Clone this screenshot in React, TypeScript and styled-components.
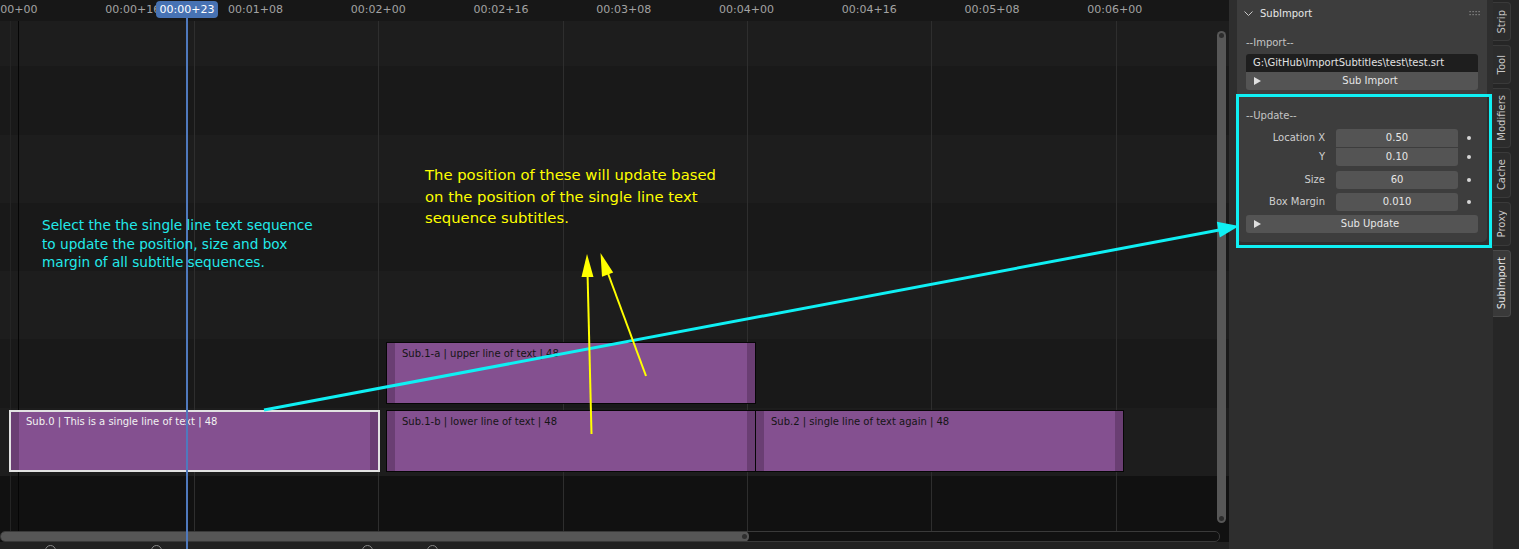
import React from "react";
import styled, { createGlobalStyle } from "styled-components";

const GlobalStyle = createGlobalStyle`
  html, body { margin: 0; padding: 0; background: #111111; overflow: hidden; }
  body { font-family: "DejaVu Sans", "Noto Sans", sans-serif; }
  #root { width: 1519px; height: 549px; }
`;

const Screen = styled.div`
  position: relative;
  display: flex;
  width: 1519px;
  height: 549px;
  overflow: hidden;
  font-family: "DejaVu Sans", "Noto Sans", sans-serif;
`;

/* ---------- timeline ---------- */
const Timeline = styled.div`
  position: relative;
  display: flex;
  flex-direction: column;
  width: 1229px;
  flex: none;
  background: #111111;
`;

const Ruler = styled.div`
  position: relative;
  height: 21px;
  flex: none;
  background: #171717;
  overflow: hidden;
  z-index: 4;
`;

const RulerLabel = styled.span<{ $x: number }>`
  position: absolute;
  top: 3px;
  left: ${(p) => p.$x}px;
  transform: translateX(-50%);
  font-size: 11px;
  line-height: 14px;
  color: #a3a3a3;
  white-space: nowrap;
`;

const ChannelArea = styled.div`
  position: relative;
  flex: 1;
  overflow: hidden;
`;

const ChannelStack = styled.div`
  display: flex;
  flex-direction: column;
  height: 100%;
`;

const Channel = styled.div<{ $h: number; $tone: "light" | "dark" | "empty" }>`
  height: ${(p) => p.$h}px;
  flex: none;
  background: ${(p) =>
    p.$tone === "light" ? "#1d1d1d" : p.$tone === "dark" ? "#191919" : "#111111"};
`;

const GridLine = styled.div<{ $x: number; $tone?: "grid" | "faint" | "start" }>`
  position: absolute;
  top: 21px;
  bottom: 0;
  left: ${(p) => p.$x}px;
  width: 1px;
  z-index: 1;
  background: ${(p) =>
    p.$tone === "start" ? "#050505" : p.$tone === "faint" ? "#242424" : "#2e2e2e"};
`;

const Strip = styled.div<{ $x: number; $y: number; $w: number; $selected?: boolean }>`
  position: absolute;
  left: ${(p) => p.$x}px;
  top: ${(p) => p.$y}px;
  width: ${(p) => p.$w}px;
  height: 62px;
  box-sizing: border-box;
  display: flex;
  z-index: 2;
  background: #845090;
  border: ${(p) => (p.$selected ? "2px solid #e2e2e2" : "1px solid #060606")};
`;

const StripHandle = styled.div`
  width: 8px;
  flex: none;
  background: #6a3e73;
`;

const StripLabel = styled.div<{ $selected?: boolean }>`
  flex: 1;
  min-width: 0;
  padding: ${(p) => (p.$selected ? "4px" : "5px")} 0 0 7px;
  font-size: 10px;
  line-height: 12px;
  white-space: nowrap;
  overflow: hidden;
  color: ${(p) => (p.$selected ? "#f2f2f2" : "#151515")};
`;

const VScroll = styled.div`
  position: absolute;
  right: 3px;
  top: 10px;
  width: 9px;
  height: 492px;
  border-radius: 5px;
  background: #575757;
  z-index: 3;
  &::before,
  &::after {
    content: "";
    position: absolute;
    left: 2px;
    width: 5px;
    height: 5px;
    border-radius: 50%;
    background: #2c2c2c;
  }
  &::before { top: 2px; }
  &::after { bottom: 2px; }
`;

const HScroll = styled.div`
  position: relative;
  z-index: 2;
  height: 11px;
  flex: none;
  display: flex;
  padding-right: 9px;
  background: #111111;
`;

const HTrack = styled.div`
  flex: 1;
  display: flex;
  border: 1px solid #3a3a3a;
  border-radius: 5px;
  overflow: hidden;
`;

const HThumb = styled.div`
  position: relative;
  width: 754px;
  margin: -1px 0 -1px -6px;
  flex: none;
  border-radius: 5px;
  background: #565656;
  &::after {
    content: "";
    position: absolute;
    right: 2px;
    top: 3px;
    width: 5px;
    height: 5px;
    border-radius: 50%;
    background: #2e2e2e;
  }
`;

const Footer = styled.div`
  position: relative;
  z-index: 2;
  height: 7px;
  flex: none;
  background: #222222;
  display: flex;
  overflow: hidden;
`;

const FooterIcon = styled.span<{ $ml: number }>`
  margin-left: ${(p) => p.$ml}px;
  margin-top: 3px;
  width: 9px;
  height: 9px;
  border: 1px solid #8a8a8a;
  border-radius: 50%;
  flex: none;
`;

const Playhead = styled.div`
  position: absolute;
  left: 186px;
  top: 17px;
  bottom: 0;
  width: 2px;
  background: #4f79bd;
  z-index: 6;
`;

const PlayheadBadge = styled.div`
  position: absolute;
  left: 156px;
  top: 1px;
  width: 62px;
  height: 17px;
  border-radius: 4px;
  background: #4772b3;
  color: #ffffff;
  font-size: 11px;
  line-height: 17px;
  text-align: center;
  z-index: 7;
`;

/* ---------- sidebar ---------- */
const Sidebar = styled.div`
  width: 264px;
  flex: none;
  box-sizing: border-box;
  padding: 0 6px 0 8px;
  background: #2e2e2e;
`;

const Panel = styled.div`
  background: #3d3d3d;
  border-radius: 0 0 5px 5px;
  color: #dcdcdc;
  font-size: 10px;
`;

const PanelHeader = styled.div`
  height: 26px;
  display: flex;
  align-items: center;
  padding: 1px 7px 0;
  box-sizing: border-box;
  gap: 7px;
  color: #e6e6e6;
`;

const PanelTitle = styled.span`
  flex: 1;
  line-height: 12px;
`;

const PanelBody = styled.div`
  padding: 0 9px 9px;
  display: flex;
  flex-direction: column;
`;

const SectionLabel = styled.div<{ $mt: number }>`
  margin-top: ${(p) => p.$mt}px;
  height: 18px;
  line-height: 18px;
  color: #c4c4c4;
`;

const TextField = styled.div`
  margin-top: 2px;
  height: 18px;
  line-height: 18px;
  padding-left: 7px;
  background: #1e1e1e;
  border-radius: 3px 3px 0 0;
  color: #e2e2e2;
  white-space: nowrap;
  overflow: hidden;
`;

const ActionButton = styled.div<{ $mt: number; $round: "bottom" | "all" }>`
  position: relative;
  margin-top: ${(p) => p.$mt}px;
  height: 18px;
  line-height: 18px;
  padding-left: 16px;
  background: #545454;
  border-radius: ${(p) => (p.$round === "all" ? "3px" : "0 0 3px 3px")};
  color: #e6e6e6;
  text-align: center;
  &::before {
    content: "";
    position: absolute;
    left: 8px;
    top: 5px;
    border-left: 7px solid #e0e0e0;
    border-top: 4px solid transparent;
    border-bottom: 4px solid transparent;
  }
`;

const PropRow = styled.div<{ $mt: number }>`
  margin-top: ${(p) => p.$mt}px;
  display: grid;
  grid-template-columns: 85px 127px 20px;
  height: 18px;
  align-items: center;
`;

const PropLabel = styled.span`
  text-align: right;
  padding-right: 6px;
  color: #cfcfcf;
  line-height: 18px;
`;

const PropField = styled.div<{ $round: string }>`
  margin-left: 5px;
  height: 18px;
  line-height: 18px;
  background: #545454;
  border-radius: ${(p) => p.$round};
  text-align: center;
  color: #e6e6e6;
`;

const Decorator = styled.span`
  justify-self: center;
  width: 4px;
  height: 4px;
  border-radius: 50%;
  background: #d6d6d6;
  margin-left: 1px;
`;

/* ---------- tabs ---------- */
const TabStrip = styled.div`
  width: 26px;
  flex: none;
  display: flex;
  flex-direction: column;
  gap: 4px;
  padding-top: 2px;
  background: #262626;
  box-sizing: border-box;
`;

const Tab = styled.div<{ $len: number; $active?: boolean }>`
  width: 18px;
  height: ${(p) => p.$len}px;
  flex: none;
  box-sizing: border-box;
  display: flex;
  align-items: center;
  justify-content: center;
  background: ${(p) => (p.$active ? "#393939" : "#2c2c2c")};
  border: 1px solid ${(p) => (p.$active ? "#4a4a4a" : "#3a3a3a")};
  border-left: none;
  border-radius: 0 4px 4px 0;
  color: ${(p) => (p.$active ? "#e8e8e8" : "#c8c8c8")};
`;

const TabText = styled.span`
  writing-mode: vertical-rl;
  transform: rotate(180deg);
  font-size: 10px;
  line-height: 12px;
  white-space: nowrap;
`;

/* ---------- annotations ---------- */
const Note = styled.div<{ $x: number; $y: number; $size: number; $lh: number; $color: string }>`
  position: absolute;
  left: ${(p) => p.$x}px;
  top: ${(p) => p.$y}px;
  font-family: "DejaVu Sans", sans-serif;
  font-size: ${(p) => p.$size}px;
  line-height: ${(p) => p.$lh}px;
  color: ${(p) => p.$color};
  white-space: nowrap;
  z-index: 9;
  pointer-events: none;
`;

const Overlay = styled.svg`
  position: absolute;
  left: 0;
  top: 0;
  z-index: 10;
  pointer-events: none;
`;

const rulerLabels = [
  "00:00+00",
  "00:00+16",
  "00:01+08",
  "00:02+00",
  "00:02+16",
  "00:03+08",
  "00:04+00",
  "00:04+16",
  "00:05+08",
  "00:06+00",
];

const channels: { h: number; tone: "light" | "dark" | "empty" }[] = [
  { h: 45, tone: "light" },
  { h: 69, tone: "dark" },
  { h: 68, tone: "light" },
  { h: 68, tone: "dark" },
  { h: 68, tone: "light" },
  { h: 69, tone: "dark" },
  { h: 68, tone: "light" },
  { h: 55, tone: "empty" },
];

const strips = [
  { x: 9, y: 389, w: 371, label: "Sub.0 | This is a single line of text | 48", selected: true },
  { x: 386, y: 321, w: 370, label: "Sub.1-a | upper line of text | 48" },
  { x: 386, y: 389, w: 370, label: "Sub.1-b | lower line of text | 48" },
  { x: 755, y: 389, w: 369, label: "Sub.2 | single line of text again | 48" },
];

const tabs = [
  { label: "Strip", len: 39 },
  { label: "Tool", len: 39 },
  { label: "Modifiers", len: 60 },
  { label: "Cache", len: 46 },
  { label: "Proxy", len: 44 },
  { label: "SubImport", len: 67, active: true },
];

const props = [
  { label: "Location X", value: "0.50", mt: 4, round: "3px 3px 0 0" },
  { label: "Y", value: "0.10", mt: 1, round: "0 0 3px 3px" },
  { label: "Size", value: "60", mt: 5, round: "3px" },
  { label: "Box Margin", value: "0.010", mt: 4, round: "3px" },
];

export default function App() {
  return (
    <>
      <GlobalStyle />
      <Screen>
        <Timeline>
          <Ruler>
            {rulerLabels.map((l, i) => (
              <RulerLabel key={l} $x={10 + i * 122.75}>
                {l}
              </RulerLabel>
            ))}
          </Ruler>
          <ChannelArea>
            <ChannelStack>
              {channels.map((c, i) => (
                <Channel key={i} $h={c.h} $tone={c.tone} />
              ))}
            </ChannelStack>
            {strips.map((s) => (
              <Strip key={s.label} $x={s.x} $y={s.y} $w={s.w} $selected={s.selected}>
                <StripHandle />
                <StripLabel $selected={s.selected}>{s.label}</StripLabel>
                <StripHandle />
              </Strip>
            ))}
            <VScroll />
          </ChannelArea>
          <HScroll>
            <HTrack>
              <HThumb />
            </HTrack>
          </HScroll>
          <Footer>
            <FooterIcon $ml={45} />
            <FooterIcon $ml={95} />
            <FooterIcon $ml={200} />
            <FooterIcon $ml={54} />
          </Footer>
          <GridLine $x={10} $tone="faint" />
          <GridLine $x={18} $tone="start" />
          {[194, 378, 563, 747, 931, 1116].map((x) => (
            <GridLine key={x} $x={x} />
          ))}
          <Playhead />
          <PlayheadBadge>00:00+23</PlayheadBadge>
        </Timeline>

        <Sidebar>
          <Panel>
            <PanelHeader>
              <svg width="9" height="6" viewBox="0 0 9 6">
                <polyline points="0.5,0.5 4.5,4.5 8.5,0.5" fill="none" stroke="#c8c8c8" strokeWidth="1" />
              </svg>
              <PanelTitle>SubImport</PanelTitle>
              <svg width="11" height="5" viewBox="0 0 11 5">
                {[0, 1].map((r) =>
                  [0, 1, 2, 3].map((c) => (
                    <rect key={`${r}-${c}`} x={c * 3 + 0.5} y={r * 3} width="1.2" height="1.2" fill="#909090" />
                  ))
                )}
              </svg>
            </PanelHeader>
            <PanelBody>
              <SectionLabel $mt={8}>--Import--</SectionLabel>
              <TextField>G:\GitHub\ImportSubtitles\test\test.srt</TextField>
              <ActionButton $mt={0} $round="bottom">Sub Import</ActionButton>
              <SectionLabel $mt={17}>--Update--</SectionLabel>
              {props.map((p) => (
                <PropRow key={p.label} $mt={p.mt}>
                  <PropLabel>{p.label}</PropLabel>
                  <PropField $round={p.round}>{p.value}</PropField>
                  <Decorator />
                </PropRow>
              ))}
              <ActionButton $mt={4} $round="all">Sub Update</ActionButton>
            </PanelBody>
          </Panel>
        </Sidebar>

        <TabStrip>
          {tabs.map((t) => (
            <Tab key={t.label} $len={t.len} $active={t.active}>
              <TabText>{t.label}</TabText>
            </Tab>
          ))}
        </TabStrip>

        <Note $x={42} $y={216} $size={13.65} $lh={18.7} $color="#22e9ea">
          Select the the single line text sequence
          <br />
          to update the position, size and box
          <br />
          margin of all subtitle sequences.
        </Note>
        <Note $x={425} $y={164} $size={14.8} $lh={21.5} $color="#ffff00">
          The position of these will update based
          <br />
          on the position of the single line text
          <br />
          sequence subtitles.
        </Note>

        <Overlay width="1519" height="549" viewBox="0 0 1519 549">
          <rect x="1237.5" y="95.5" width="253" height="151" fill="none" stroke="#0ff0f4" strokeWidth="3" />
          <line x1="264" y1="410" x2="1222" y2="229.5" stroke="#0ff0f4" strokeWidth="3" />
          <polygon points="1239,226 1216.8,221.8 1219.8,237.6" fill="#0ff0f4" />
          <line x1="591.5" y1="434" x2="587.5" y2="272" stroke="#ffff00" strokeWidth="2" />
          <polygon points="587,254 581.5,277 593.5,277" fill="#ffff00" />
          <line x1="646" y1="376" x2="606" y2="268" stroke="#ffff00" strokeWidth="2" />
          <polygon points="600.5,253 613.2,272.5 602,276.7" fill="#ffff00" />
        </Overlay>
      </Screen>
    </>
  );
}
